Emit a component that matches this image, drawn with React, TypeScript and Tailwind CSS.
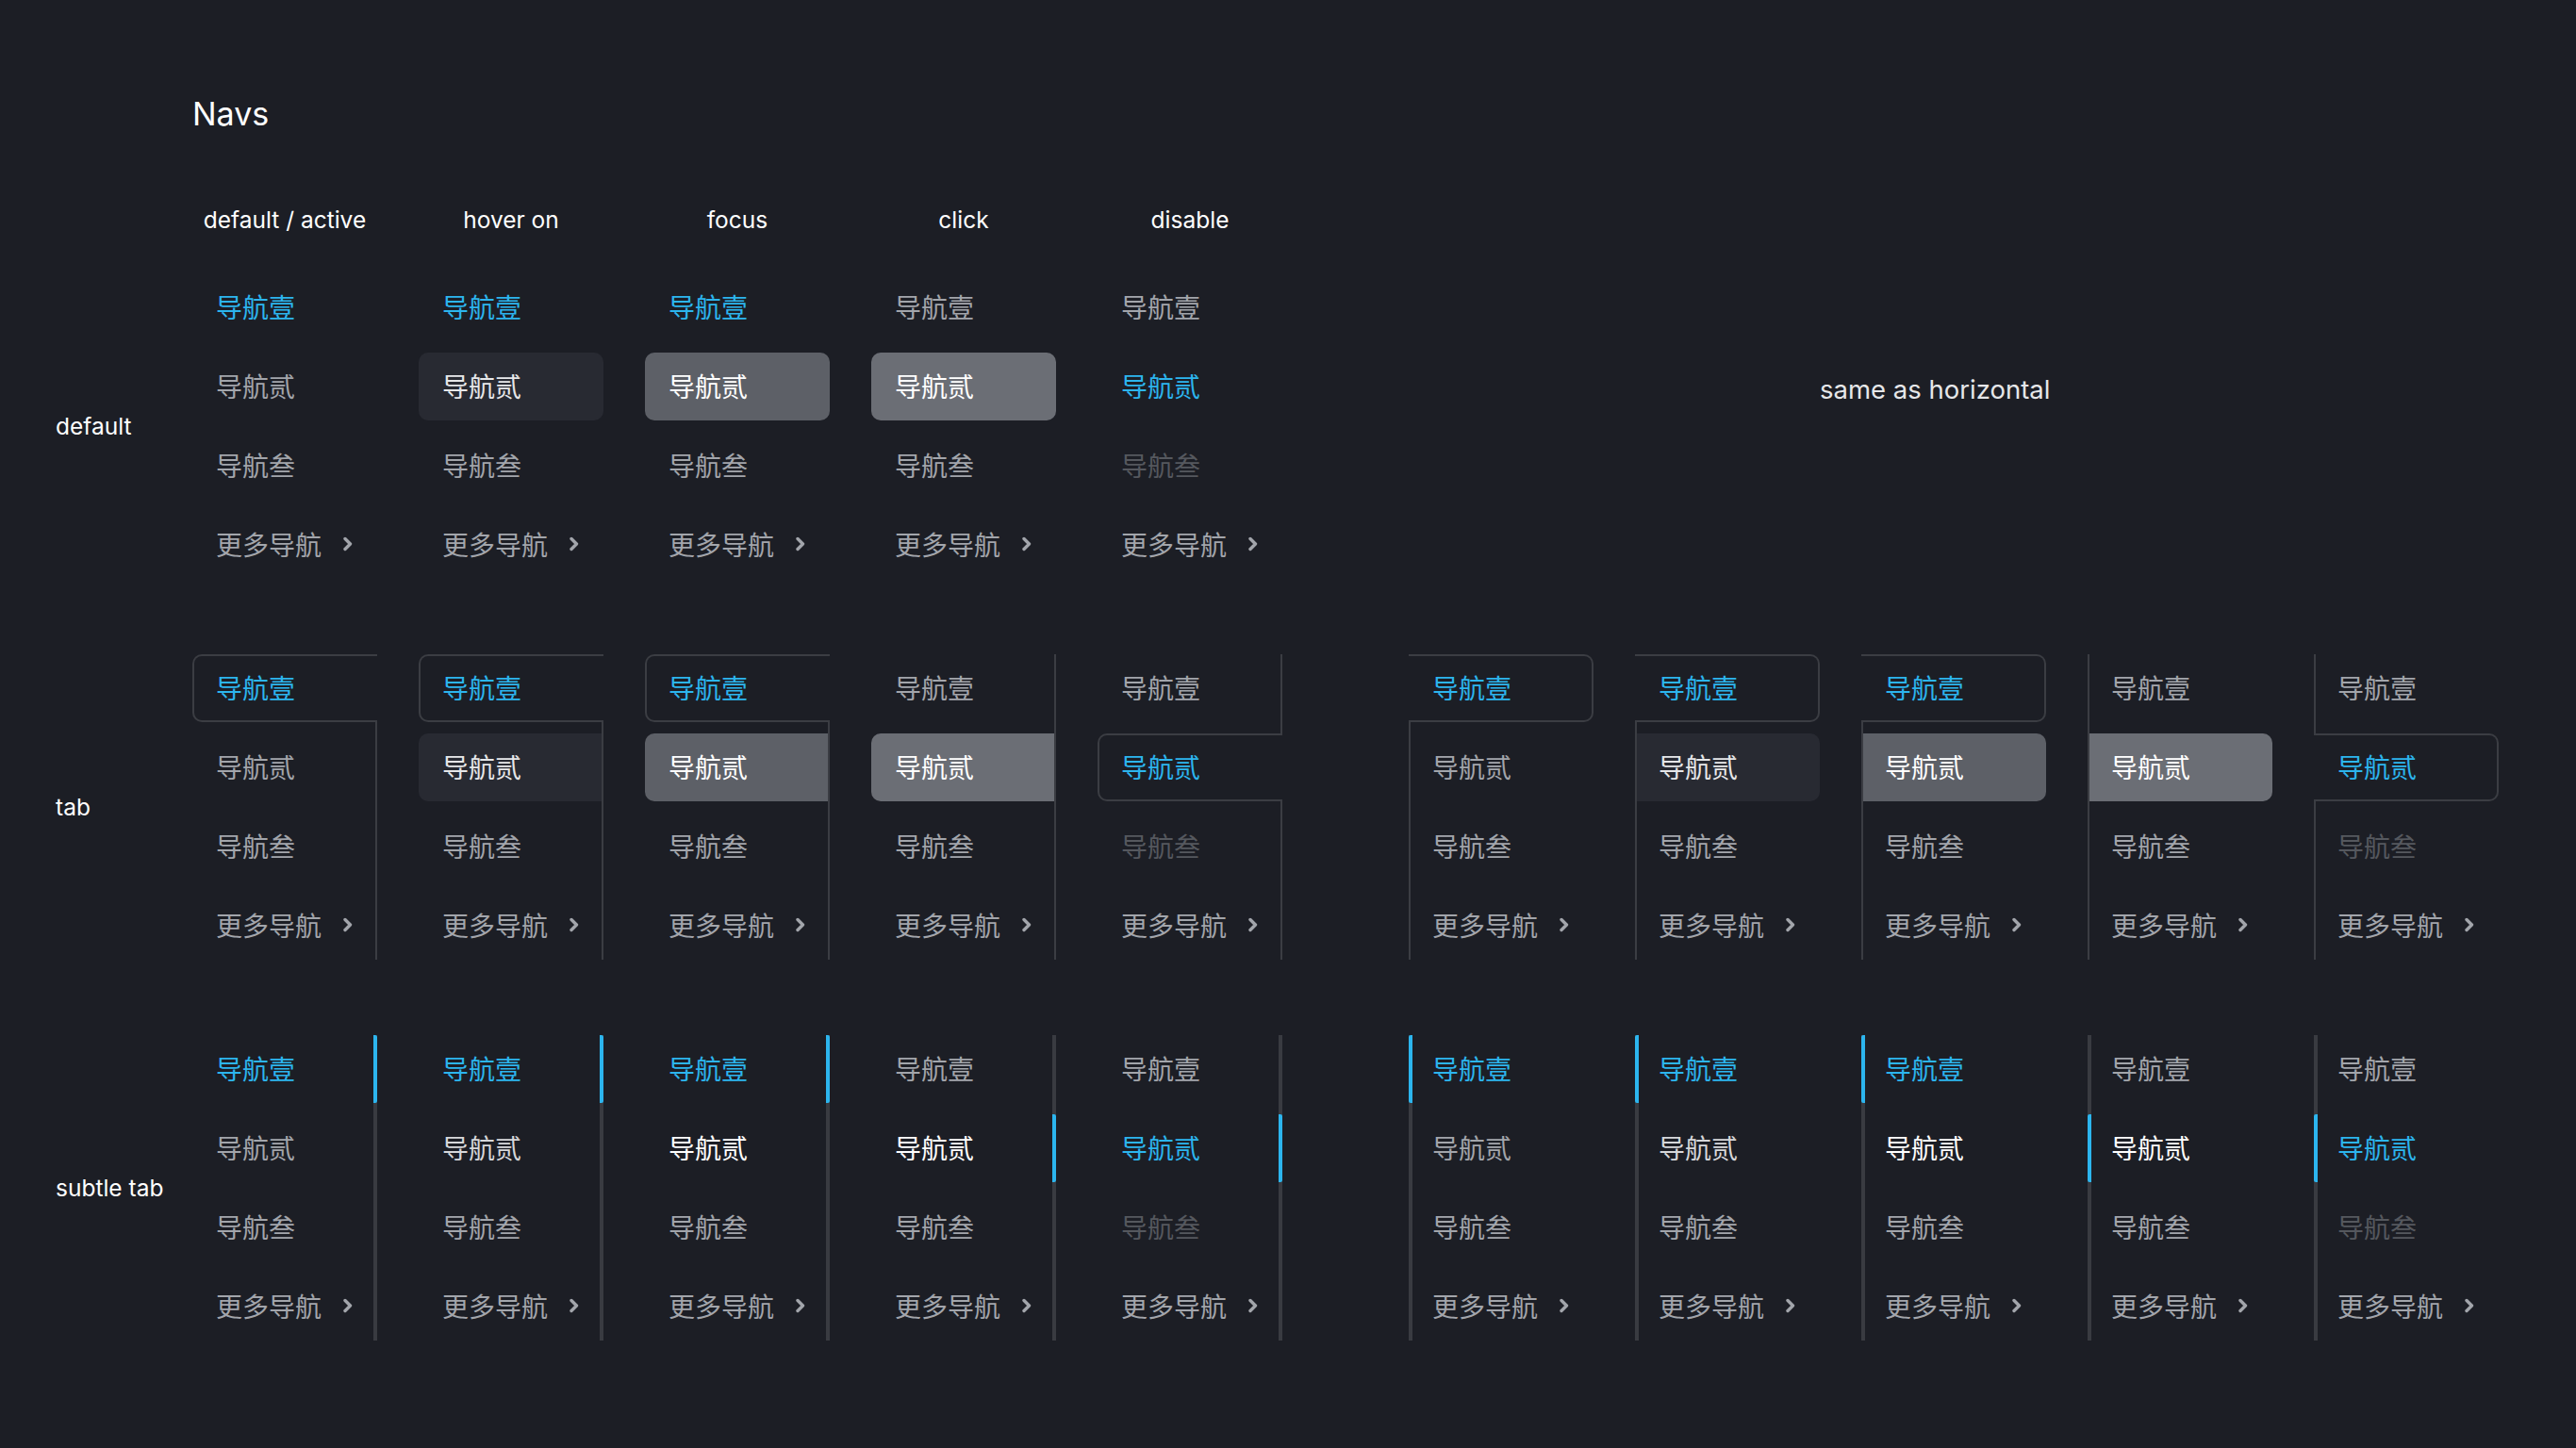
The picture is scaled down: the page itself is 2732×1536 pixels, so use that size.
import React from 'react';

type Tone = 'active' | 'normal' | 'disabled' | 'hover' | 'focus' | 'click';

type Column = { tones: Tone[]; active: number | null };

const labels = ['导航壹', '导航贰', '导航叁'];

// shared state columns: default / active, hover on, focus, click, disable
const columns: Column[] = [
  { tones: ['active', 'normal', 'normal', 'normal'], active: 0 },
  { tones: ['active', 'hover', 'normal', 'normal'], active: 0 },
  { tones: ['active', 'focus', 'normal', 'normal'], active: 0 },
  { tones: ['normal', 'click', 'normal', 'normal'], active: null },
  { tones: ['normal', 'active', 'disabled', 'normal'], active: 1 },
];

// subtle tab marks the clicked row with the bar too
const subtleColumns: Column[] = columns.map((c, i) => (i === 3 ? { ...c, active: 1 } : c));

const boxTone: Record<Tone, string> = {
  active: 'text-[#2cb5ee]',
  normal: 'text-[#a2a5ab]',
  disabled: 'text-[#55585e]',
  hover: 'text-[#e6e7e9] bg-[#282a32]',
  focus: 'text-white bg-[#5d6067]',
  click: 'text-white bg-[#6b6e75]',
};

const subtleTone: Record<Tone, string> = {
  active: 'text-[#2cb5ee]',
  normal: 'text-[#a2a5ab]',
  disabled: 'text-[#55585e]',
  hover: 'text-[#d6d7da]',
  focus: 'text-white',
  click: 'text-white',
};

const Chevron = () => (
  <svg width="10" height="16" viewBox="0 0 10 16" fill="none" className="shrink-0">
    <path d="M2 2.5L7.5 8L2 13.5" stroke="#a2a5ab" strokeWidth="3.4" strokeLinecap="round" strokeLinejoin="round" />
  </svg>
);

const ItemText = ({ index }: { index: number }) =>
  index === 3 ? (
    <span className="flex items-center gap-[23px] text-[#a2a5ab]">
      更多导航
      <Chevron />
    </span>
  ) : (
    <span>{labels[index]}</span>
  );

const PlainColumn = ({ col }: { col: Column }) => (
  <div className="flex w-[196px] flex-col gap-[12px]">
    {col.tones.map((tone, i) => (
      <div key={i} className={`flex h-[72px] items-center rounded-[10px] pb-[2px] pl-[25px] ${boxTone[tone]}`}>
        <ItemText index={i} />
      </div>
    ))}
  </div>
);

const TabColumn = ({ col, side }: { col: Column; side: 'left' | 'right' }) => {
  const wrap =
    side === 'left'
      ? 'flex w-[196px] flex-col gap-[12px] border-r-2 border-[#3b3d43]'
      : 'flex w-[196px] flex-col gap-[12px] border-l-2 border-[#3b3d43]';
  return (
    <div className={wrap}>
      {col.tones.map((tone, i) => {
        const isActive = col.active === i;
        let shape = '';
        if (side === 'left') {
          shape = isActive
            ? '-mr-[2px] rounded-l-[10px] border-2 border-r-0 border-[#3b3d43] bg-[#1c1e25] pl-[23px]'
            : 'rounded-l-[10px] pl-[25px]';
        } else {
          shape = isActive
            ? '-ml-[2px] rounded-r-[10px] border-2 border-l-0 border-[#3b3d43] bg-[#1c1e25] pl-[25px]'
            : 'rounded-r-[10px] pl-[23px]';
        }
        return (
          <div key={i} className={`flex h-[72px] items-center pb-[2px] ${shape} ${boxTone[tone]}`}>
            <ItemText index={i} />
          </div>
        );
      })}
    </div>
  );
};

const SubtleColumn = ({ col, side }: { col: Column; side: 'left' | 'right' }) => {
  const wrap =
    side === 'left'
      ? 'flex w-[196px] flex-col gap-[12px] border-r-4 border-[#393b41]'
      : 'flex w-[196px] flex-col gap-[12px] border-l-4 border-[#393b41]';
  return (
    <div className={wrap}>
      {col.tones.map((tone, i) => {
        const isActive = col.active === i;
        let shape = '';
        if (side === 'left') {
          shape = isActive ? '-mr-[4px] border-r-4 border-[#2cb5ee] rounded-r-[2px] pl-[25px]' : 'pl-[25px]';
        } else {
          shape = isActive ? '-ml-[4px] border-l-4 border-[#2cb5ee] rounded-l-[2px] pl-[21px]' : 'pl-[21px]';
        }
        return (
          <div key={i} className={`flex h-[72px] items-center pb-[2px] ${shape} ${subtleTone[tone]}`}>
            <ItemText index={i} />
          </div>
        );
      })}
    </div>
  );
};

const RowLabel = ({ children }: { children: React.ReactNode }) => (
  <div className="flex w-[145px] shrink-0 items-center font-['Inter',sans-serif] text-[24.5px] leading-[32px] text-white">
    {children}
  </div>
);

const App = () => {
  const heads = ['default / active', 'hover on', 'focus', 'click', 'disable'];

  return (
    <div className="h-[1536px] w-[2732px] overflow-hidden bg-[#1c1e25] font-['Inter','Noto_Sans_CJK_SC',sans-serif] text-white">
      <div className="flex flex-col pl-[59px] pt-[101px]">
        {/* Title */}
        <div className="pl-[145px] text-[34px] leading-[40px] text-white">Navs</div>

        {/* State headers */}
        <div className="mt-[76px] flex gap-[44px] pl-[145px]">
          {heads.map((h) => (
            <div key={h} className="w-[196px] text-center text-[24.5px] leading-[32px] text-white">
              {h}
            </div>
          ))}
        </div>

        {/* default */}
        <div className="mt-[41px] flex font-['Noto_Sans_CJK_SC',sans-serif] text-[28px]">
          <RowLabel>default</RowLabel>
          <div className="flex gap-[44px]">
            {columns.map((c, i) => (
              <PlainColumn key={i} col={c} />
            ))}
          </div>
          <div className="ml-[570px] mt-[107px] self-start font-['Inter',sans-serif] text-[27.5px] leading-[32px] text-[#e6e7e9]">
            same as horizontal
          </div>
        </div>

        {/* tab */}
        <div className="mt-[80px] flex font-['Noto_Sans_CJK_SC',sans-serif] text-[28px]">
          <RowLabel>tab</RowLabel>
          <div className="flex gap-[44px]">
            {columns.map((c, i) => (
              <TabColumn key={i} col={c} side="left" />
            ))}
          </div>
          <div className="ml-[134px] flex gap-[44px]">
            {columns.map((c, i) => (
              <TabColumn key={i} col={c} side="right" />
            ))}
          </div>
        </div>

        {/* subtle tab */}
        <div className="mt-[80px] flex font-['Noto_Sans_CJK_SC',sans-serif] text-[28px]">
          <RowLabel>subtle tab</RowLabel>
          <div className="flex gap-[44px]">
            {subtleColumns.map((c, i) => (
              <SubtleColumn key={i} col={c} side="left" />
            ))}
          </div>
          <div className="ml-[134px] flex gap-[44px]">
            {subtleColumns.map((c, i) => (
              <SubtleColumn key={i} col={c} side="right" />
            ))}
          </div>
        </div>
      </div>
    </div>
  );
};

export default App;
